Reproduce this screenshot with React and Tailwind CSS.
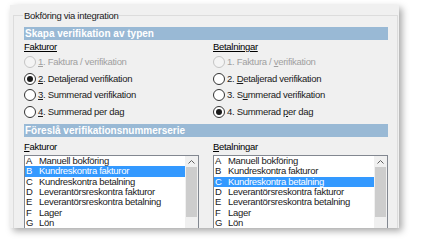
import React from "react";

const font = { fontFamily: '"Liberation Sans", Arial, sans-serif' };

function Radio({ checked, disabled }) {
  return (
    <span
      className={`relative inline-flex items-center justify-center w-[12px] h-[12px] rounded-full border shrink-0 ${
        disabled ? "border-[#c4c4c4] bg-[#f4f4f4]" : "border-[#333333] bg-white"
      }`}
    >
      {checked && <span className="w-[6px] h-[6px] rounded-full bg-[#1a1a1a]" />}
    </span>
  );
}

function RadioRow({ pre, u, post, checked, disabled }) {
  return (
    <div className={`flex items-center h-[16.5px] gap-[2px] ${disabled ? "text-[#a0a0a0]" : "text-[#1a1a1a]"}`}>
      <Radio checked={checked} disabled={disabled} />
      <span className="whitespace-nowrap">
        {pre}
        <span className="underline underline-offset-1">{u}</span>
        {post}
      </span>
    </div>
  );
}

const series = [
  ["A", "Manuell bokföring"],
  ["B", "Kundreskontra fakturor"],
  ["C", "Kundreskontra betalning"],
  ["D", "Leverantörsreskontra fakturor"],
  ["E", "Leverantörsreskontra betalning"],
  ["F", "Lager"],
  ["G", "Lön"],
];

function ListBox({ selected }) {
  return (
    <div className="flex w-[175px] h-[75px] border border-[#828790] bg-white overflow-hidden">
      <div className="flex-1 flex flex-col">
        {series.map(([k, v]) => (
          <div
            key={k}
            className={`flex items-center h-[10.33px] leading-[10.33px] shrink-0 ${
              k === selected ? "bg-[#3399ff] text-white" : "text-[#1a1a1a]"
            }`}
          >
            <span className="w-[14px] pl-[1px]">{k}</span>
            <span className="whitespace-nowrap">{v}</span>
          </div>
        ))}
      </div>
      <div className="w-[13px] flex flex-col bg-[#f0f0f0]">
        <div className="h-[11px] flex items-center justify-center">
          <svg width="7" height="4" viewBox="0 0 7 4">
            <path d="M0.5 3.5 L3.5 0.5 L6.5 3.5" fill="none" stroke="#606060" strokeWidth="1" />
          </svg>
        </div>
        <div className="mx-[1px] h-[50px] bg-[#cdcdcd]" />
      </div>
    </div>
  );
}

function Bar({ children }) {
  return (
    <div className="h-[13px] bg-[#99b9d5] text-white font-bold text-[10px] tracking-normal leading-[13px] pl-[1px]">
      {children}
    </div>
  );
}

export default function App() {
  return (
    <div className="w-[424px] h-[240px] bg-white overflow-hidden text-[9.5px] tracking-[-0.3px]" style={font}>
      <div className="ml-[10px] mt-[5px] w-[389px] h-[223px] bg-[#f0f0f0] shadow-[3px_3px_7px_rgba(0,0,0,0.35)] pt-[5px] pl-[3px] overflow-hidden">
        <div className="relative w-[385px] h-[230px] border-l border-t border-r border-[#dcdcdc] mt-[5px] pl-[10px] pr-[9px]">
          <div className="absolute left-[9px] -top-[7px] px-[1px] bg-[#f0f0f0] text-[#1a1a1a] leading-[13px]">
            Bokföring via integration
          </div>
          <div className="pt-[11px]">
            <Bar>Skapa verifikation av typen</Bar>
            <div className="flex">
              <div className="w-[189px] flex flex-col">
                <div className="h-[14px] leading-[14px]">
                  <span className="underline underline-offset-1">Fakturor</span>
                </div>
                <div className="flex flex-col">
                  <RadioRow disabled pre="" u="1" post=". Faktura / verifikation" />
                  <RadioRow checked pre="" u="2" post=". Detaljerad verifikation" />
                  <RadioRow pre="" u="3" post=". Summerad verifikation" />
                  <RadioRow pre="" u="4" post=". Summerad per dag" />
                </div>
              </div>
              <div className="flex-1 flex flex-col">
                <div className="h-[14px] leading-[14px]">
                  <span className="underline underline-offset-1">Betalningar</span>
                </div>
                <div className="flex flex-col">
                  <RadioRow disabled pre="1. Faktura / " u="v" post="erifikation" />
                  <RadioRow pre="2. " u="D" post="etaljerad verifikation" />
                  <RadioRow pre="3. S" u="u" post="mmerad verifikation" />
                  <RadioRow checked pre="4. Summerad " u="p" post="er dag" />
                </div>
              </div>
            </div>
            <div className="mt-[4px]">
              <Bar>Föreslå verifikationsnummerserie</Bar>
            </div>
            <div className="flex mt-[3px]">
              <div className="w-[189px] flex flex-col">
                <div className="h-[14px] leading-[14px] mb-[1px]">
                  <span className="underline underline-offset-1">F</span>akturor
                </div>
                <ListBox selected="B" />
              </div>
              <div className="flex-1 flex flex-col">
                <div className="h-[14px] leading-[14px] mb-[1px]">
                  <span className="underline underline-offset-1">B</span>etalningar
                </div>
                <ListBox selected="C" />
              </div>
            </div>
          </div>
        </div>
      </div>
    </div>
  );
}
